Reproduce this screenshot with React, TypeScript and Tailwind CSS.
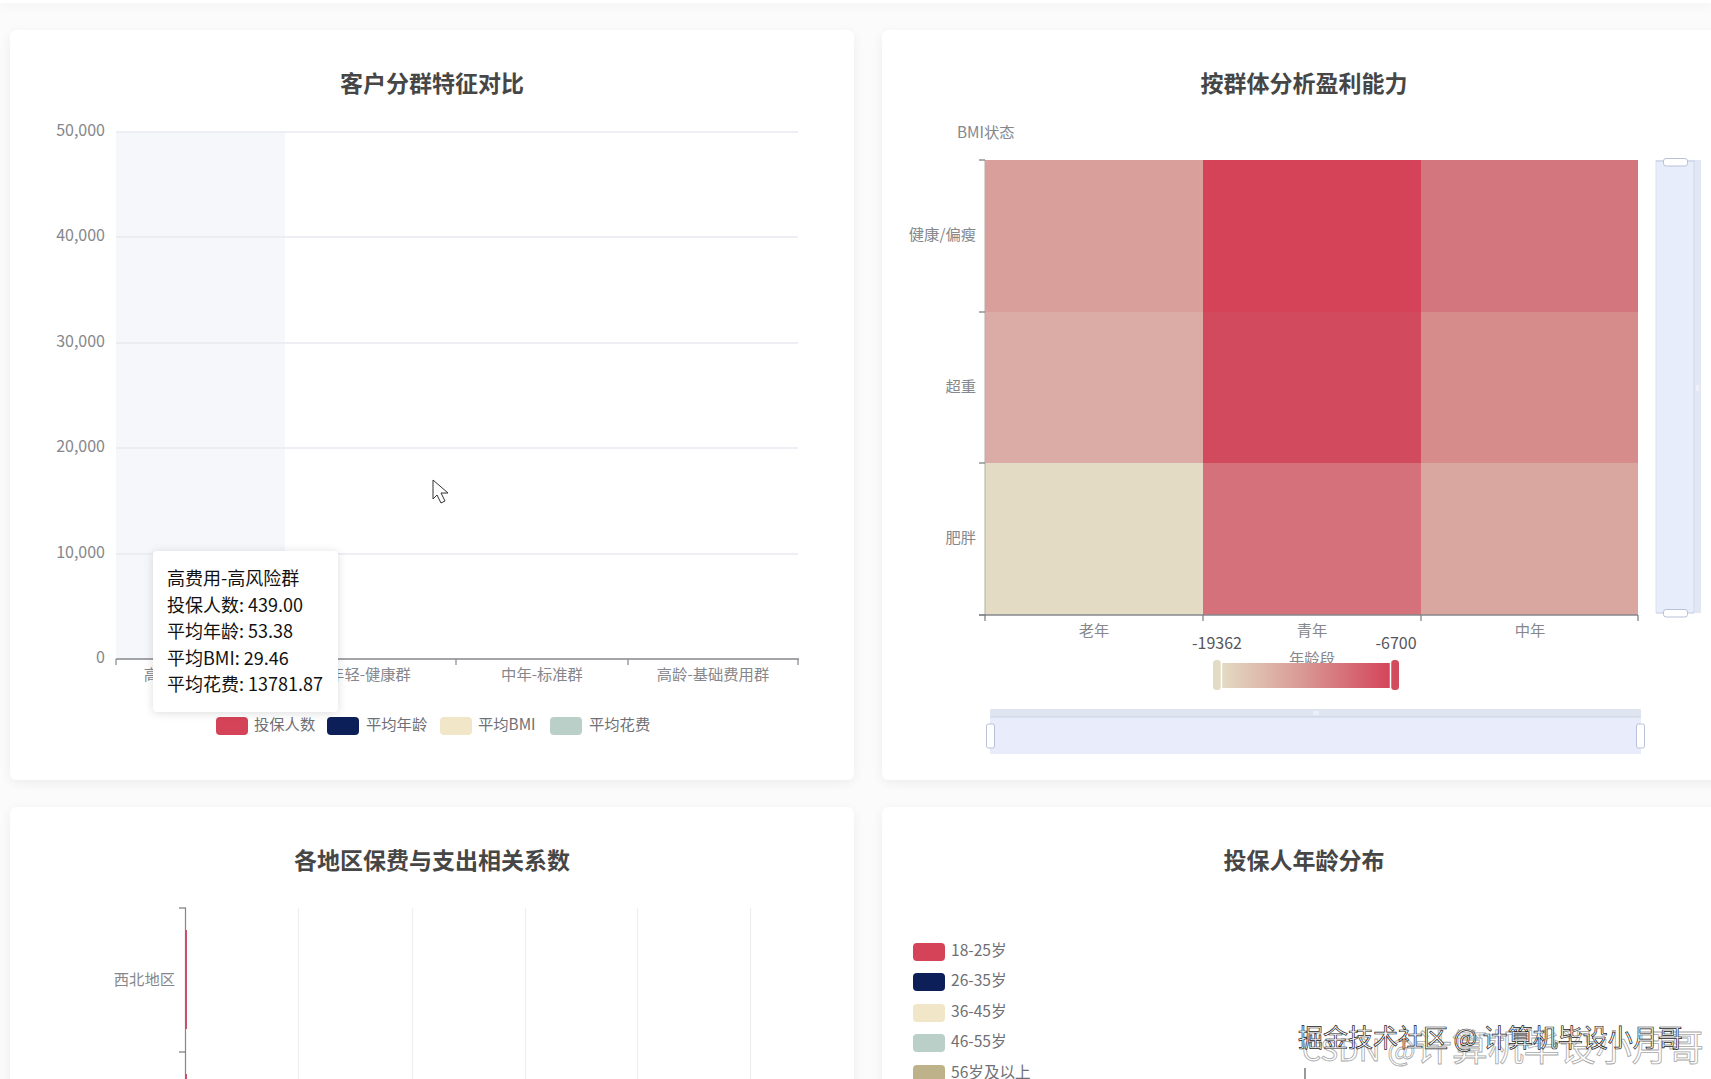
import React from "react";

const FONT = "font-['Noto_Sans_CJK_SC','Noto_Sans',sans-serif]";

const RED = "#d44358";
const NAVY = "#0d1f58";
const SAND = "#f1e6c8";
const SAGE = "#bbcfc9";
const KHAKI = "#bdb289";

// all chart svgs use page coordinates through their viewBox
const ChartText = ({
  x,
  y,
  children,
  anchor = "start",
  size = 15.3,
  fill = "#85878c",
}: {
  x: number;
  y: number;
  children: React.ReactNode;
  anchor?: "start" | "middle" | "end";
  size?: number;
  fill?: string;
}) => (
  <text x={x} y={y - 1} textAnchor={anchor} dominantBaseline="central" fontSize={size} fill={fill}>
    {children}
  </text>
);

const Swatch = ({ x, y, color }: { x: number; y: number; color: string }) => (
  <rect x={x} y={y} width={32} height={18} rx={4} fill={color} />
);

const SegmentChart = () => {
  const yAxis = [
    ["50,000", 132],
    ["40,000", 237],
    ["30,000", 343],
    ["20,000", 448],
    ["10,000", 554],
  ] as const;
  const legend = [
    [216, RED, 254, "投保人数"],
    [327, NAVY, 366, "平均年龄"],
    [440, SAND, 478, "平均BMI"],
    [550, SAGE, 589, "平均花费"],
  ] as const;
  return (
    <svg viewBox="10 97 844 681" className="block h-[681px] w-[844px]">
      <rect x={116} y={132} width={169} height={527} fill="#f6f7fb" />
      {yAxis.map(([label, y]) => (
        <g key={label}>
          <line x1={116} x2={798} y1={y} y2={y} stroke="#e8eaf0" strokeWidth={1.4} />
          <ChartText x={105} y={y - 2} anchor="end" size={16}>
            {label}
          </ChartText>
        </g>
      ))}
      <ChartText x={105} y={657} anchor="end" size={16}>
        0
      </ChartText>
      <line x1={116} x2={799} y1={659} y2={659} stroke="#85878c" strokeWidth={1.4} />
      {[116, 285, 456, 628, 798].map((x) => (
        <line key={x} x1={x} x2={x} y1={659} y2={665} stroke="#85878c" strokeWidth={1.2} />
      ))}
      <ChartText x={200} y={674} anchor="middle">
        高费用-高风险群
      </ChartText>
      <ChartText x={370} y={674} anchor="middle">
        年轻-健康群
      </ChartText>
      <ChartText x={542} y={674} anchor="middle">
        中年-标准群
      </ChartText>
      <ChartText x={713} y={674} anchor="middle">
        高龄-基础费用群
      </ChartText>
      {legend.map(([sx, color, tx, label]) => (
        <g key={label}>
          <Swatch x={sx} y={717} color={color} />
          <ChartText x={tx} y={724} fill="#6f7075">
            {label}
          </ChartText>
        </g>
      ))}
      {/* mouse pointer left in the capture */}
      <path
        d="M433 480V499L437 495L441 503L445 501L441 493H448Z"
        fill="#fff"
        stroke="#333"
        strokeWidth={1}
        strokeLinejoin="round"
      />
    </svg>
  );
};

const ProfitHeatmap = () => {
  const xs = [985, 1203, 1421, 1638];
  const ys = [160, 312, 463, 615];
  const cells = [
    ["#d99f9a", "#d54358", "#d4767d"],
    ["#daaca5", "#d24a5e", "#d68c8a"],
    ["#e3dbc3", "#d5717a", "#d9a79f"],
  ];
  return (
    <svg viewBox="882 97 844 681" className="block h-[681px] w-[844px]">
      <defs>
        <linearGradient id="heat-scale" x1="0" x2="1" y1="0" y2="0">
          <stop offset="0" stopColor="#e3dbc3" />
          <stop offset="0.5" stopColor="#d99593" />
          <stop offset="1" stopColor={RED} />
        </linearGradient>
      </defs>
      <ChartText x={957} y={132}>
        BMI状态
      </ChartText>
      {cells.map((row, r) =>
        row.map((color, c) => (
          <rect
            key={`${r}-${c}`}
            x={xs[c]}
            y={ys[r]}
            width={xs[c + 1] - xs[c]}
            height={ys[r + 1] - ys[r]}
            fill={color}
            shapeRendering="crispEdges"
          />
        ))
      )}
      <line x1={985} x2={985} y1={160} y2={615} stroke="#b5aca5" strokeWidth={1} />
      {ys.map((y) => (
        <line key={y} x1={979} x2={985} y1={y} y2={y} stroke="#77787c" strokeWidth={1.2} />
      ))}
      <line x1={979} x2={1638} y1={615} y2={615} stroke="#85878c" strokeWidth={1.4} />
      {xs.map((x) => (
        <line key={x} x1={x} x2={x} y1={615} y2={621} stroke="#77787c" strokeWidth={1.2} />
      ))}
      <ChartText x={976} y={234} anchor="end">
        健康/偏瘦
      </ChartText>
      <ChartText x={976} y={386} anchor="end">
        超重
      </ChartText>
      <ChartText x={976} y={537} anchor="end">
        肥胖
      </ChartText>
      <ChartText x={1094} y={630} anchor="middle">
        老年
      </ChartText>
      <ChartText x={1312} y={630} anchor="middle">
        青年
      </ChartText>
      <ChartText x={1530} y={630} anchor="middle">
        中年
      </ChartText>
      <ChartText x={1312} y={658} anchor="middle">
        年龄段
      </ChartText>
      <ChartText x={1217} y={643} anchor="middle" size={16} fill="#55565a">
        -19362
      </ChartText>
      <ChartText x={1396} y={643} anchor="middle" size={16} fill="#55565a">
        -6700
      </ChartText>
      <rect x={1221} y={663} width={171} height={25} fill="url(#heat-scale)" />
      <rect x={1213} y={660} width={8} height={30} rx={3.5} fill="#e3dbc3" />
      <rect x={1391} y={660} width={8} height={30} rx={3.5} fill="#d24a5e" />
      <line x1={1221.5} x2={1221.5} y1={662} y2={689} stroke="#fff" strokeWidth={1.5} />
      <line x1={1390.5} x2={1390.5} y1={662} y2={689} stroke="#fff" strokeWidth={1.5} />

      {/* horizontal data zoom */}
      <rect x={990} y={709} width={651} height={8} rx={1} fill="#dfe4f1" />
      <rect x={990} y={717} width={651} height={37} fill="#e8ecfb" />
      <line x1={990} x2={1641} y1={717} y2={717} stroke="#ccd3e4" strokeWidth={1} />
      <path d="M1314 711v4M1316 711v4M1318 711v4" stroke="#fff" strokeWidth={0.8} />
      <rect x={986.5} y={724} width={8} height={24} rx={2} fill="#fff" stroke="#b8c1d8" />
      <rect x={1636.5} y={724} width={8} height={24} rx={2} fill="#fff" stroke="#b8c1d8" />

      {/* vertical data zoom */}
      <rect x={1656} y={160} width={38} height={453} fill="#e8edfb" />
      <rect x={1694} y={160} width={7} height={453} fill="#e2e7f3" />
      <line x1={1694} x2={1694} y1={160} y2={613} stroke="#d3d9e8" strokeWidth={1} />
      <line x1={1656} x2={1656} y1={160} y2={613} stroke="#dbe2f2" strokeWidth={1} />
      <line x1={1656} x2={1694} y1={161} y2={161} stroke="#c3cade" strokeWidth={1} />
      <line x1={1656} x2={1694} y1={613} y2={613} stroke="#c3cade" strokeWidth={1} />
      <path d="M1696 386h3M1696 388h3M1696 390h3" stroke="#fff" strokeWidth={0.8} />
      <rect x={1663.5} y={158.5} width={24} height={7.5} rx={2.5} fill="#fff" stroke="#b8c1d8" />
      <rect x={1663.5} y={609.5} width={24} height={7.5} rx={2.5} fill="#fff" stroke="#b8c1d8" />
    </svg>
  );
};

const RegionCorrelation = () => (
  <svg viewBox="10 874 844 681" className="block h-[681px] w-[844px]">
    {[298.5, 412.5, 525.5, 637.5, 750.5].map((x) => (
      <line key={x} x1={x} x2={x} y1={908} y2={1090} stroke="#eeeeee" strokeWidth={1.2} />
    ))}
    <line x1={185.5} x2={185.5} y1={908} y2={1090} stroke="#85878c" strokeWidth={1.2} />
    {[908, 1052].map((y) => (
      <line key={y} x1={179} x2={186} y1={y} y2={y} stroke="#77787c" strokeWidth={1.2} />
    ))}
    <rect x={185} y={930} width={2} height={99} fill="#c9506a" />
    <rect x={185} y={1074} width={2} height={20} fill="#c9506a" />
    <ChartText x={175} y={979} anchor="end">
      西北地区
    </ChartText>
  </svg>
);

const AgePie = () => {
  const rows = [
    [943, RED, "18-25岁"],
    [973, NAVY, "26-35岁"],
    [1004, SAND, "36-45岁"],
    [1034, SAGE, "46-55岁"],
    [1065, KHAKI, "56岁及以上"],
  ] as const;
  return (
    <svg viewBox="882 874 844 681" className="block h-[681px] w-[844px]">
      {rows.map(([y, color, label]) => (
        <g key={label}>
          <Swatch x={913} y={y} color={color} />
          <ChartText x={951} y={y + 7} size={15.6} fill="#6f7075">
            {label}
          </ChartText>
        </g>
      ))}
      <line x1={1305} x2={1305} y1={1068} y2={1100} stroke="#55565a" strokeWidth={1.2} />
    </svg>
  );
};

const Card = ({ title, children }: { title: string; children: React.ReactNode }) => (
  <section className="relative h-[750px] w-[844px] rounded-md bg-white shadow-[0_3px_12px_rgba(0,0,0,0.06)]">
    <h2 className="pt-[37px] text-center text-[23px] leading-[30px] font-bold text-[#464646]">{title}</h2>
    {children}
  </section>
);

const App = () => {
  return (
    <div className={`relative h-[1079px] w-[1711px] overflow-hidden bg-[#fbfbfb] ${FONT}`}>
      <div className="h-[3px] bg-white shadow-[0_3px_8px_rgba(0,0,0,0.06)]" />
      <div className="grid w-[1726px] grid-cols-[844px_844px] gap-x-[28px] gap-y-[27px] pt-[27px] pl-[10px]">
        <Card title="客户分群特征对比">
          <SegmentChart />
          <div className="absolute top-[521px] left-[143px] h-[161px] w-[185px] rounded bg-white px-[14px] py-[13px] text-[18px] leading-[26.5px] whitespace-nowrap text-[#111] shadow-[0_1px_10px_rgba(0,0,0,0.14)]">
            <div>高费用-高风险群</div>
            <div>投保人数: 439.00</div>
            <div>平均年龄: 53.38</div>
            <div>平均BMI: 29.46</div>
            <div>平均花费: 13781.87</div>
          </div>
        </Card>
        <Card title="按群体分析盈利能力">
          <ProfitHeatmap />
        </Card>
        <Card title="各地区保费与支出相关系数">
          <RegionCorrelation />
        </Card>
        <Card title="投保人年龄分布">
          <AgePie />
        </Card>
      </div>
      {/* platform watermarks burned into the capture */}
      <div className="absolute top-[1020px] left-[1302px] text-[36px] leading-[50px] whitespace-nowrap text-white/60 [-webkit-text-stroke:0.8px_#a8a8a8]">
        <span className="text-[30px]">CSDN @</span>计算机毕设小月哥
      </div>
      <div className="absolute top-[1018px] left-[1298px] text-[25px] leading-[36px] whitespace-nowrap text-white [-webkit-text-stroke:0.7px_#222]">
        掘金技术社区 @ 计算机毕设小月哥
      </div>
    </div>
  );
};

export default App;
